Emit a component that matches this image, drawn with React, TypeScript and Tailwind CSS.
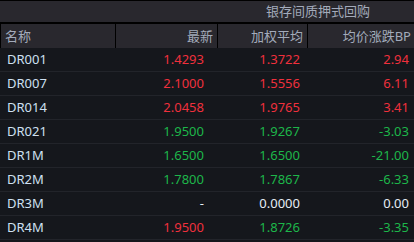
import React from "react";

type Row = { name: string; last: string; avg: string; bp: string; lc: string; ac: string; bc: string };

const R = "text-[#f0303c]";
const G = "text-[#1db64a]";
const W = "text-[#e6edf5]";

const rows: Row[] = [
  { name: "DR001", last: "1.4293", avg: "1.3722", bp: "2.94", lc: R, ac: R, bc: R },
  { name: "DR007", last: "2.1000", avg: "1.5556", bp: "6.11", lc: R, ac: R, bc: R },
  { name: "DR014", last: "2.0458", avg: "1.9765", bp: "3.41", lc: R, ac: R, bc: R },
  { name: "DR021", last: "1.9500", avg: "1.9267", bp: "-3.03", lc: G, ac: G, bc: G },
  { name: "DR1M", last: "1.6500", avg: "1.6500", bp: "-21.00", lc: G, ac: G, bc: G },
  { name: "DR2M", last: "1.7800", avg: "1.7867", bp: "-6.33", lc: G, ac: G, bc: G },
  { name: "DR3M", last: "-", avg: "0.0000", bp: "0.00", lc: W, ac: W, bc: W },
  { name: "DR4M", last: "1.9500", avg: "1.8726", bp: "-3.35", lc: R, ac: G, bc: G },
];

export default function App() {
  return (
    <div
      className="w-[414px] h-[242px] overflow-hidden bg-[#15171c] text-[13px] leading-none"
      style={{ fontFamily: '"Noto Sans", "Noto Sans CJK SC", sans-serif' }}
    >
      <div className="h-[1px] bg-black" />
      <div className="h-[21px] bg-[#29282e] flex items-center">
        <div className="w-[218px]" />
        <div className="flex-1 flex justify-center pl-[4px] text-[#a3abbb]">银存间质押式回购</div>
      </div>
      <div className="h-[2px] bg-black" />
      <div className="h-[24px] bg-[#29282e] flex text-[#a3abbb] border-l border-black">
        <div className="w-[115px] border-r border-black flex items-center pl-[4px]">名称</div>
        <div className="w-[102px] border-r border-black flex items-center justify-end pr-[4px]">最新</div>
        <div className="w-[90px] border-r border-black flex items-center justify-end pr-[4px]">加权平均</div>
        <div className="flex-1 flex items-center justify-end pr-[3px]">均价涨跌BP</div>
      </div>
      {rows.map((r) => (
        <div key={r.name} className="h-[24px] flex border-b border-[#22242a]">
          <div className="w-[116px] flex items-center pl-[7px] text-[#cfe0f2]">{r.name}</div>
          <div className={`w-[102px] flex items-center justify-end pr-[14px] ${r.lc}`}>{r.last}</div>
          <div className={`w-[90px] flex items-center justify-end pr-[8px] ${r.ac}`}>{r.avg}</div>
          <div className={`flex-1 flex items-center justify-end pr-[5px] ${r.bc}`}>{r.bp}</div>
        </div>
      ))}
    </div>
  );
}
